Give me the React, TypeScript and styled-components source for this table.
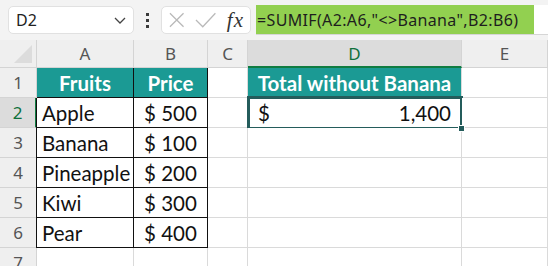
import React from "react";
import styled, { createGlobalStyle, css } from "styled-components";

const GlobalStyle = createGlobalStyle`
  html, body {
    margin: 0;
    padding: 0;
    background: #ffffff;
  }
  body {
    font-family: "Lato", "Open Sans", sans-serif;
    overflow: hidden;
  }
`;

const Page = styled.div`
  width: 548px;
  height: 266px;
  overflow: hidden;
  background: #ffffff;
`;

const Toolbar = styled.div`
  display: flex;
  align-items: center;
  height: 40px;
  padding: 0 0 0 8px;
  box-sizing: border-box;
  background: #f3f3f3;
`;

const NameBox = styled.div`
  display: flex;
  align-items: center;
  justify-content: space-between;
  width: 126px;
  height: 28px;
  box-sizing: border-box;
  padding: 0 6px 0 7px;
  background: #ffffff;
  border: 1px solid #e1e1e1;
  border-radius: 5px;
  font-family: "Noto Sans", "Open Sans", sans-serif;
  font-size: 16px;
  color: #222;
`;

const Grip = styled.div`
  display: flex;
  flex-direction: column;
  align-items: center;
  gap: 3px;
  width: 27px;

  span {
    width: 3px;
    height: 3px;
    background: #3a3a3a;
  }
`;

const FxBox = styled.div`
  display: flex;
  align-items: center;
  width: 90px;
  height: 28px;
  box-sizing: border-box;
  padding: 0 6px 0 6px;
  gap: 10px;
  background: #ffffff;
  border: 1px solid #e1e1e1;
  border-radius: 5px;
`;

const FxLabel = styled.span`
  margin-left: auto;
  font-family: "Liberation Serif", serif;
  font-style: italic;
  font-size: 21px;
  color: #333;
  letter-spacing: 1px;
`;

const FormulaBar = styled.div`
  display: flex;
  align-items: center;
  flex: 1;
  height: 29px;
  margin-left: 5px;
  background: #ffffff;
  border-bottom: 1px solid #d6d6d6;
`;

const Formula = styled.div`
  display: flex;
  align-items: center;
  width: 278px;
  height: 100%;
  padding-left: 1px;
  box-sizing: border-box;
  background: #92d050;
  font-family: "Noto Sans", "Open Sans", sans-serif;
  font-size: 16px;
  letter-spacing: 0.35px;
  color: #1e1e1e;
  white-space: nowrap;
  overflow: hidden;
`;

const Sheet = styled.div`
  display: grid;
  grid-template-columns: 37px 97px 74px 40px 214px 86px;
  grid-auto-rows: 30px;
  grid-template-rows: 28px;
`;

type CellProps = {
  $align?: "left" | "center" | "right" | "split";
  $fill?: string;
  $bold?: boolean;
  $boxed?: boolean;
};

const Cell = styled.div<CellProps>`
  position: relative;
  display: flex;
  align-items: center;
  box-sizing: border-box;
  padding: 0 5px;
  border-right: 1px solid #dadada;
  border-bottom: 1px solid #dadada;
  font-size: 20.5px;
  color: #111;
  white-space: nowrap;
  background: ${(p) => p.$fill ?? "#ffffff"};
  justify-content: ${(p) =>
    p.$align === "center"
      ? "center"
      : p.$align === "right"
      ? "flex-end"
      : p.$align === "split"
      ? "space-between"
      : "flex-start"};
  ${(p) =>
    p.$bold &&
    css`
      font-weight: 700;
      color: #ffffff;
    `}
  ${(p) =>
    p.$boxed &&
    css`
      border-right: 1px solid #111;
      border-bottom: 1px solid #111;
    `}
`;

const BoxedFirst = styled(Cell)`
  border-left: 1px solid #111;
  margin-left: -1px;
`;

const HeaderCell = styled.div<{ $active?: boolean }>`
  display: flex;
  align-items: center;
  justify-content: center;
  box-sizing: border-box;
  border-right: 1px solid #d4d4d4;
  border-bottom: 1px solid #d4d4d4;
  background: ${(p) => (p.$active ? "#dcdcdc" : "#efefef")};
  font-family: "Noto Sans", "Open Sans", sans-serif;
  font-size: 17px;
  color: ${(p) => (p.$active ? "#0f703b" : "#555")};
  ${(p) =>
    p.$active &&
    css`
      border-bottom: 2px solid #107c41;
    `}
`;

const RowHead = styled(HeaderCell)`
  ${(p) =>
    p.$active &&
    css`
      border-bottom: 1px solid #d4d4d4;
      border-right: 2px solid #107c41;
    `}
`;

const Corner = styled.div`
  position: relative;
  box-sizing: border-box;
  background: #efefef;
  border-right: 1px solid #d4d4d4;
  border-bottom: 1px solid #d4d4d4;

  &::after {
    content: "";
    position: absolute;
    right: 4px;
    bottom: 4px;
    border-style: solid;
    border-width: 0 0 18px 18px;
    border-color: transparent transparent #dcdcdc transparent;
  }
`;

const Selected = styled(Cell)`
  padding: 0 10px 0 10px;

  &::after {
    content: "";
    position: absolute;
    top: -2px;
    left: -1px;
    right: -2px;
    bottom: -3px;
    border: 3px solid #245c5b;
    pointer-events: none;
  }

  &::before {
    content: "";
    position: absolute;
    right: -4px;
    bottom: -5px;
    width: 5px;
    height: 5px;
    background: #245c5b;
    border: 1px solid #ffffff;
    z-index: 1;
  }
`;

const teal = "#1b9a94";

const fruits: [string, number][] = [
  ["Apple", 500],
  ["Banana", 100],
  ["Pineapple", 200],
  ["Kiwi", 300],
  ["Pear", 400],
];

const Chevron = () => (
  <svg width="14" height="10" viewBox="0 0 14 10">
    <path d="M2 3 L7 8 L12 3" fill="none" stroke="#444" strokeWidth="1.3" />
  </svg>
);

const CancelIcon = () => (
  <svg width="18" height="18" viewBox="0 0 18 18">
    <path d="M2 2 L16 16 M16 2 L2 16" stroke="#b9b9b9" strokeWidth="1.3" fill="none" />
  </svg>
);

const EnterIcon = () => (
  <svg width="22" height="18" viewBox="0 0 22 18">
    <path d="M1 9 L8 16 L21 2" stroke="#b9b9b9" strokeWidth="1.3" fill="none" />
  </svg>
);

const App = (): JSX.Element => {
  const emptyRow = (n: number) => (
    <React.Fragment key={n}>
      <RowHead>{n}</RowHead>
      <Cell />
      <Cell />
      <Cell />
      <Cell />
      <Cell />
    </React.Fragment>
  );

  return (
    <Page>
      <GlobalStyle />
      <Toolbar>
        <NameBox>
          D2
          <Chevron />
        </NameBox>
        <Grip>
          <span />
          <span />
          <span />
        </Grip>
        <FxBox>
          <CancelIcon />
          <EnterIcon />
          <FxLabel>fx</FxLabel>
        </FxBox>
        <FormulaBar>
          <Formula>=SUMIF(A2:A6,"&lt;&gt;Banana",B2:B6)</Formula>
        </FormulaBar>
      </Toolbar>

      <Sheet>
        <Corner />
        <HeaderCell>A</HeaderCell>
        <HeaderCell>B</HeaderCell>
        <HeaderCell>C</HeaderCell>
        <HeaderCell $active>D</HeaderCell>
        <HeaderCell>E</HeaderCell>

        <RowHead>1</RowHead>
        <Cell $fill={teal} $bold $boxed $align="center">Fruits</Cell>
        <Cell $fill={teal} $bold $boxed $align="center">Price</Cell>
        <Cell />
        <Cell $fill={teal} $bold $align="center">Total without Banana</Cell>
        <Cell />

        {fruits.map(([name, price], i) => (
          <React.Fragment key={name}>
            <RowHead $active={i === 0}>{i + 2}</RowHead>
            <BoxedFirst $boxed>{name}</BoxedFirst>
            <Cell $boxed $align="center">$ {price}</Cell>
            <Cell />
            {i === 0 ? (
              <Selected $align="split">
                <span>$</span>
                <span>1,400</span>
              </Selected>
            ) : (
              <Cell />
            )}
            <Cell />
          </React.Fragment>
        ))}

        {emptyRow(7)}
      </Sheet>
    </Page>
  );
};

export default App;
